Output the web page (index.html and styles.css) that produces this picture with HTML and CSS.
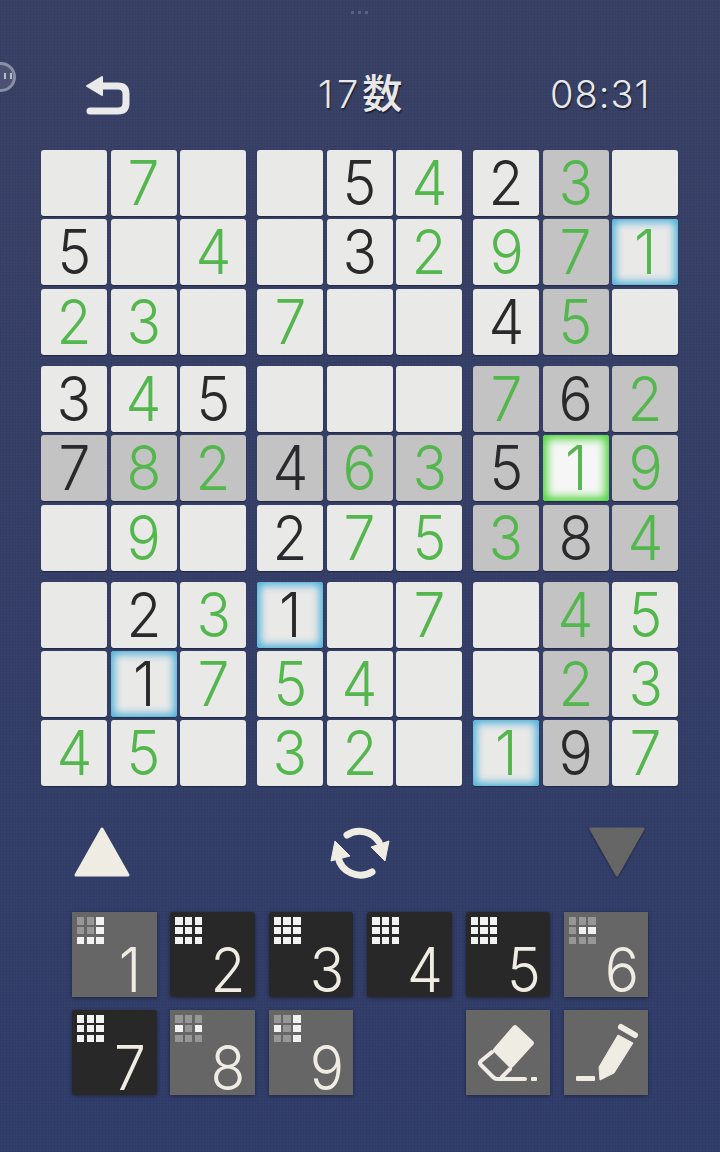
FILE: index.html
```html
<!DOCTYPE html>
<html lang="ja">
<head>
<meta charset="utf-8">
<title>17数</title>
<link rel="stylesheet" href="styles.css">
</head>
<body>
<div class="dots"><i></i><i></i><i></i></div>
<svg class="side" width="18" height="32" viewBox="0 0 18 32"><circle cx="1" cy="16" r="13.5" fill="#4b5272" stroke="#8a8fa6" stroke-width="3"/><rect x="4" y="12" width="2" height="6" fill="#b9bcc9"/><rect x="10" y="12" width="2" height="6" fill="#b9bcc9"/></svg>
<header class="top">
  <svg class="back" width="46" height="42" viewBox="0 0 46 42"><path d="M14 11H33Q41 11 41 19V28Q41 36 33 36H5" fill="none" stroke="#eaeaea" stroke-width="7" stroke-linecap="round"/><path d="M2 11L17 2V20Z" fill="#eaeaea" stroke="#eaeaea" stroke-width="2" stroke-linejoin="round"/></svg>
  <div class="title">17<span class="kanji">数</span></div>
  <div class="time">08:31</div>
</header>
<main class="board">
  <div class="block">
    <div class="cell"></div><div class="cell g"><b>7</b></div><div class="cell"></div>
    <div class="cell k"><b>5</b></div><div class="cell"></div><div class="cell g"><b>4</b></div>
    <div class="cell g"><b>2</b></div><div class="cell g"><b>3</b></div><div class="cell"></div>
  </div>
  <div class="block">
    <div class="cell"></div><div class="cell k"><b>5</b></div><div class="cell g"><b>4</b></div>
    <div class="cell"></div><div class="cell k"><b>3</b></div><div class="cell g"><b>2</b></div>
    <div class="cell g"><b>7</b></div><div class="cell"></div><div class="cell"></div>
  </div>
  <div class="block">
    <div class="cell k"><b>2</b></div><div class="cell g s"><b>3</b></div><div class="cell"></div>
    <div class="cell g"><b>9</b></div><div class="cell g s"><b>7</b></div><div class="cell g blue"><b>1</b></div>
    <div class="cell k"><b>4</b></div><div class="cell g s"><b>5</b></div><div class="cell"></div>
  </div>
  <div class="block">
    <div class="cell k"><b>3</b></div><div class="cell g"><b>4</b></div><div class="cell k"><b>5</b></div>
    <div class="cell k s"><b>7</b></div><div class="cell g s"><b>8</b></div><div class="cell g s"><b>2</b></div>
    <div class="cell"></div><div class="cell g"><b>9</b></div><div class="cell"></div>
  </div>
  <div class="block">
    <div class="cell"></div><div class="cell"></div><div class="cell"></div>
    <div class="cell k s"><b>4</b></div><div class="cell g s"><b>6</b></div><div class="cell g s"><b>3</b></div>
    <div class="cell k"><b>2</b></div><div class="cell g"><b>7</b></div><div class="cell g"><b>5</b></div>
  </div>
  <div class="block">
    <div class="cell g s"><b>7</b></div><div class="cell k s"><b>6</b></div><div class="cell g s"><b>2</b></div>
    <div class="cell k s"><b>5</b></div><div class="cell g green"><b>1</b></div><div class="cell g s"><b>9</b></div>
    <div class="cell g s"><b>3</b></div><div class="cell k s"><b>8</b></div><div class="cell g s"><b>4</b></div>
  </div>
  <div class="block">
    <div class="cell"></div><div class="cell k"><b>2</b></div><div class="cell g"><b>3</b></div>
    <div class="cell"></div><div class="cell k blue"><b>1</b></div><div class="cell g"><b>7</b></div>
    <div class="cell g"><b>4</b></div><div class="cell g"><b>5</b></div><div class="cell"></div>
  </div>
  <div class="block">
    <div class="cell k blue"><b>1</b></div><div class="cell"></div><div class="cell g"><b>7</b></div>
    <div class="cell g"><b>5</b></div><div class="cell g"><b>4</b></div><div class="cell"></div>
    <div class="cell g"><b>3</b></div><div class="cell g"><b>2</b></div><div class="cell"></div>
  </div>
  <div class="block">
    <div class="cell"></div><div class="cell g s"><b>4</b></div><div class="cell g"><b>5</b></div>
    <div class="cell"></div><div class="cell g s"><b>2</b></div><div class="cell g"><b>3</b></div>
    <div class="cell g blue"><b>1</b></div><div class="cell k s"><b>9</b></div><div class="cell g"><b>7</b></div>
  </div>
</main>
<section class="tools">
  <svg width="58" height="52" viewBox="0 0 58 52"><path d="M29 3L55 49H3Z" fill="#efece3" stroke="#efece3" stroke-width="3" stroke-linejoin="round"/></svg>
  <svg class="cycle" width="62" height="54" viewBox="330 826 62 54"><g fill="none" stroke="#efece3" stroke-width="7" stroke-linecap="round"><path d="M347 836A23 23 0 0 1 379 843"/><path d="M338 858A23 23 0 0 0 372 873"/></g><g fill="#efece3" stroke="#efece3" stroke-linejoin="round"><path d="M335 842L331 862L350 857Z"/><path d="M389 842L371 848L385 862Z"/></g></svg>
  <svg class="down" width="58" height="52" viewBox="0 0 58 52"><path d="M3 3H55L29 49Z" fill="#666" stroke="#666" stroke-width="3" stroke-linejoin="round"/></svg>
</section>
<section class="pad">
  <button class="key off"><span class="mini"><i></i><i></i><u></u><i></i><i></i><u></u><u></u><u></u><u></u></span><b>1</b></button>
  <button class="key"><span class="mini"><u></u><u></u><u></u><u></u><u></u><u></u><u></u><u></u><u></u></span><b>2</b></button>
  <button class="key"><span class="mini"><u></u><u></u><u></u><u></u><u></u><u></u><u></u><u></u><u></u></span><b>3</b></button>
  <button class="key"><span class="mini"><u></u><u></u><u></u><u></u><u></u><u></u><u></u><u></u><u></u></span><b>4</b></button>
  <button class="key"><span class="mini"><u></u><u></u><u></u><u></u><u></u><u></u><u></u><u></u><u></u></span><b>5</b></button>
  <button class="key off"><span class="mini"><i></i><i></i><i></i><i></i><u></u><u></u><i></i><i></i><i></i></span><b>6</b></button>
  <button class="key"><span class="mini"><u></u><u></u><u></u><u></u><u></u><u></u><u></u><u></u><u></u></span><b>7</b></button>
  <button class="key off"><span class="mini"><i></i><i></i><i></i><u></u><i></i><u></u><i></i><i></i><i></i></span><b>8</b></button>
  <button class="key off"><span class="mini"><i></i><i></i><u></u><u></u><i></i><u></u><i></i><i></i><u></u></span><b>9</b></button>
  <div class="blank"></div>
  <button class="key off"><svg width="84" height="84" viewBox="0 0 84 84"><path d="M51 15L67 30Q69 32 67 34L47 56Q45 58 43 56L28 41Q26 39 28 37L47 15Q49 13 51 15Z" fill="#efece3"/><path d="M26 41L15 50Q13 52 15 54L27 66Q29 68 31 68H59M36 66L44 58" fill="none" stroke="#efece3" stroke-width="4" stroke-linecap="round"/><rect x="65" y="66" width="6" height="4" rx="1" fill="#efece3"/></svg></button>
  <button class="key off"><svg width="84" height="84" viewBox="0 0 84 84"><path d="M57 16L71 24" fill="none" stroke="#efece3" stroke-width="6" stroke-linecap="round"/><path d="M54 24L69 32L50 62L36 69L35 56Z" fill="#efece3" stroke="#efece3" stroke-width="1" stroke-linejoin="round"/><rect x="12" y="65" width="19" height="5" rx="1" fill="#efece3"/></svg></button>
</section>
</body>
</html>
```
FILE: styles.css
```css
* { box-sizing: border-box; }
html, body { margin: 0; height: 1152px; overflow: hidden; }
body {
  position: relative;
  padding: 0 41px;
  font-family: Inter, "Noto Sans CJK JP", sans-serif;
  background-color: #363f67;
  background-image:
    repeating-linear-gradient(0deg, rgba(0,0,0,.04) 0 1px, transparent 1px 3px),
    repeating-linear-gradient(90deg, rgba(0,0,0,.04) 0 1px, transparent 1px 3px),
    linear-gradient(#3a4267, #323e6c);
}
.dots { position: absolute; left: 351px; top: 11px; display: flex; gap: 4px; }
.dots i { width: 3px; height: 3px; background: #5a6283; }
.side { position: absolute; left: 0; top: 61px; }
.top { height: 150px; display: flex; align-items: flex-start; padding-top: 75px; }
.back { margin: 0 0 0 44px; flex: none; }
.title { margin-left: 187px; width: 100px; font-size: 38px; font-weight: 300; line-height: 38px; color: #e8e8e8; letter-spacing: 4px; text-shadow: 1px 2px 1px rgba(0,0,0,.45); white-space: nowrap; }
.kanji { font-size: 40px; font-weight: 500; letter-spacing: 0; }
.time { margin-left: 132px; font-size: 38px; font-weight: 300; line-height: 38px; color: #e8e8e8; letter-spacing: 1px; text-shadow: 1px 2px 1px rgba(0,0,0,.45); white-space: nowrap; }
.board { display: grid; grid-template-columns: repeat(3, 205.5px); column-gap: 10.5px; row-gap: 11px; width: 638px; }
.block { display: grid; grid-template-columns: repeat(3, 66.3px); grid-auto-rows: 66px; gap: 3.4px 3.3px; }
.cell {
  display: flex; align-items: center; justify-content: center;
  background: #e9e9e8; border-radius: 3px;
  box-shadow: 0 1px 1px rgba(0,0,0,.4);
}
.cell b, .key b { display: block; font-weight: 330; font-size: 62px; line-height: 66px; transform: scaleX(.92); }
.g { color: #54b74d; }
.k { color: #2a2a2c; }
.s { background: #c3c3c3; }
.blue { box-shadow: inset 0 0 9px 3px #45aed8, 0 1px 1px rgba(0,0,0,.4); }
.green { background: #f6f6f6; box-shadow: inset 0 0 9px 4px #4fd63c, 0 1px 1px rgba(0,0,0,.4); }
.tools { display: flex; align-items: center; justify-content: space-between; margin: 39px 0 0 32px; width: 573px; height: 54px; }
.tools svg { display: block; }
.cycle { transform: translateX(1px); }
.down { filter: drop-shadow(0 1px 1px rgba(0,0,0,.4)); }
.pad { display: grid; grid-template-columns: repeat(6, 84.5px); grid-auto-rows: 84.5px; column-gap: 13.9px; row-gap: 13.5px; margin: 33px 0 0 31px; }
.key {
  position: relative; padding: 0; border: 0; background: #282828; border-radius: 3px;
  color: #efece3; font-family: inherit;
  box-shadow: 0 1px 4px rgba(0,0,0,.4);
}
.key.off { background: #666; border-radius: 0; }
.key svg { display: block; }
.key b { position: absolute; left: 38px; width: 40px; top: 24.5px; text-align: center; }
.mini { position: absolute; left: 5px; top: 5px; display: grid; grid-template-columns: repeat(3, 7.4px); grid-auto-rows: 7.4px; gap: 2.3px; }
.mini u { background: #f2f2f2; }
.mini i { background: #979797; }
```
